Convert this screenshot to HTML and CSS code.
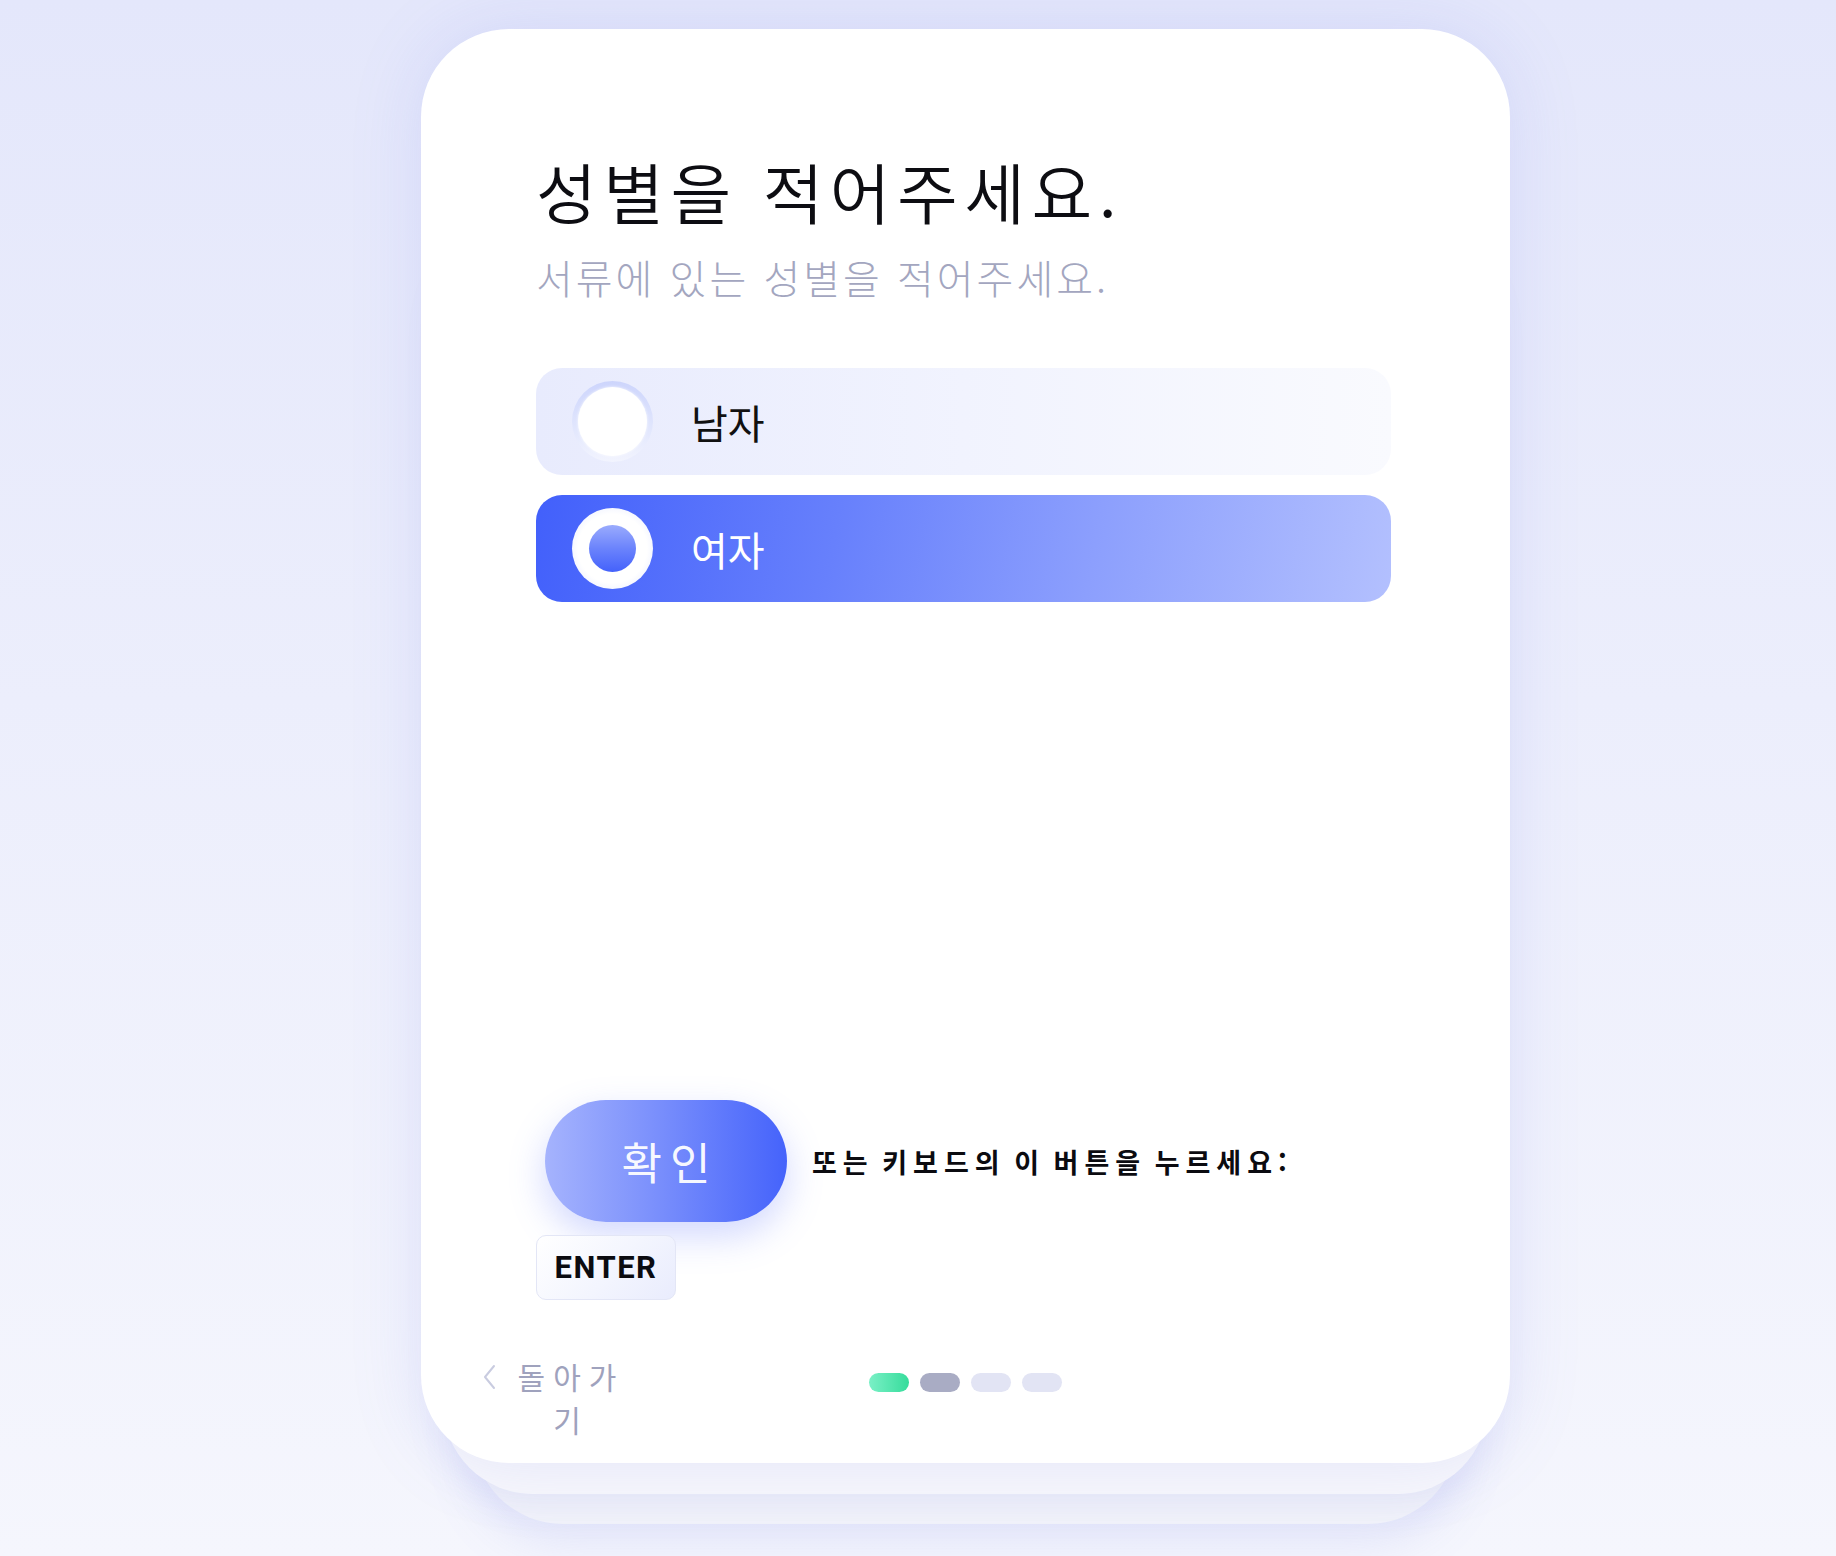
FILE: index.html
```html
<!DOCTYPE html>
<html lang="ko">
<head>
<meta charset="utf-8">
<title>성별</title>
<link rel="stylesheet" href="styles.css">
</head>
<body>
<main class="stage">
  <section class="card">
    <div class="content">
      <h1 class="title">성별을 적어주세요.</h1>
      <p class="subtitle">서류에 있는 성별을 적어주세요.</p>

      <div class="options">
        <label class="option">
          <span class="radio"><span class="radio-inner"></span></span>
          <span class="option-label">남자</span>
        </label>
        <label class="option option-selected">
          <span class="radio"><span class="radio-inner"></span></span>
          <span class="option-label">여자</span>
        </label>
      </div>
    </div>

    <div class="actions">
      <button class="confirm" type="button">확인</button>
      <span class="hint">또는 키보드의 이 버튼을 누르세요:</span>
      <kbd class="key">ENTER</kbd>
    </div>

    <footer class="footer">
      <a class="back" href="#">
        <svg class="chev" width="14" height="28" viewBox="0 0 14 28" aria-hidden="true">
          <polyline points="12,3 3,14 12,25" fill="none" stroke="#c9cce0" stroke-width="2" stroke-linecap="round" stroke-linejoin="round"/>
        </svg>
        <span class="back-text">돌아가기</span>
      </a>
      <div class="dots">
        <span class="dot dot-done"></span>
        <span class="dot dot-current"></span>
        <span class="dot"></span>
        <span class="dot"></span>
      </div>
      <span class="footer-spacer"></span>
    </footer>
  </section>
</main>
</body>
</html>
```

FILE: styles.css
```css
* { box-sizing: border-box; }

html, body {
  margin: 0;
  height: 100%;
}

body {
  background: linear-gradient(180deg, #e4e7fb 0%, #eceefc 45%, #f5f6fd 100%);
  font-family: "Noto Sans CJK KR", "Noto Sans", sans-serif;
  color: #111;
  overflow: hidden;
}

.stage {
  isolation: isolate;
  padding: 29px 0 0 421px;
}

.card {
  position: relative;
  width: 1089px;
  height: 1434px;
  background: #fff;
  border-radius: 88px;
  box-shadow: 0 0 70px rgba(120, 128, 230, 0.17);
  display: flex;
  flex-direction: column;
  padding: 122px 0 22px;
}

.card::before,
.card::after {
  content: "";
  position: absolute;
  border-radius: 90px;
}

.card::before {
  z-index: -1;
  left: 22px;
  right: 22px;
  top: 200px;
  bottom: -31px;
  background: #f8f8fc;
  box-shadow: 0 10px 40px rgba(120, 128, 230, 0.10);
}

.card::after {
  z-index: -2;
  left: 52px;
  right: 52px;
  top: 300px;
  bottom: -61px;
  background: #f3f4fa;
  box-shadow: 0 16px 50px rgba(120, 128, 230, 0.16);
}

.content {
  padding: 0 119px 0 115px;
}

.title {
  margin: 0;
  font-size: 66px;
  line-height: 79px;
  font-weight: 350;
  letter-spacing: 6.5px;
  color: #0d0d12;
  white-space: nowrap;
}

.subtitle {
  margin: 21px 0 0;
  font-size: 40px;
  line-height: 52px;
  font-weight: 300;
  letter-spacing: 3px;
  color: #a3a6bf;
  white-space: nowrap;
}

.options {
  margin-top: 65px;
  display: flex;
  flex-direction: column;
  gap: 20px;
}

.option {
  height: 107px;
  border-radius: 26px;
  display: flex;
  align-items: center;
  padding-left: 36px;
  background: linear-gradient(90deg, #e8ebfd 0%, #f1f3fe 50%, #f9fafe 100%);
  cursor: pointer;
}

.radio {
  width: 81px;
  height: 81px;
  border-radius: 50%;
  flex: none;
  padding: 6px;
  background: linear-gradient(180deg, #cdd5fc 0%, #e2e7fd 60%, #f2f4fe 100%);
  display: flex;
  align-items: center;
  justify-content: center;
}

.radio-inner {
  width: 100%;
  height: 100%;
  border-radius: 50%;
  background: #fff;
  box-shadow: 0 0 3px rgba(255, 255, 255, 0.9);
}

.option-label {
  margin-left: 38px;
  font-size: 40px;
  line-height: 1;
  font-weight: 400;
  color: #111;
}

.option-selected {
  background: linear-gradient(100deg, #4260fb 0%, #6780fc 35%, #8c9ffd 65%, #b3c0fe 100%);
}

.option-selected .radio {
  padding: 17px;
  background: radial-gradient(circle at 50% 50%, #ffffff 60%, #eef1ff 80%, #dfe5ff 100%);
}

.option-selected .radio-inner {
  background: linear-gradient(180deg, #9aabfd 0%, #6b83fc 50%, #4462fb 100%);
  box-shadow: none;
}

.option-selected .option-label {
  color: #fff;
}

.actions {
  margin-top: auto;
  padding: 0 119px 0 115px;
  display: flex;
  flex-wrap: wrap;
  align-items: center;
  column-gap: 25px;
  row-gap: 13px;
}

.confirm {
  margin-left: 9px;
  width: 242px;
  height: 122px;
  border: 0;
  border-radius: 61px;
  background: linear-gradient(90deg, #a5b3fd 0%, #7b90fc 45%, #4563fb 100%);
  box-shadow: 0 14px 36px rgba(95, 115, 250, 0.28);
  color: rgba(255, 255, 255, 0.95);
  font-family: "Noto Sans CJK KR", sans-serif;
  font-size: 44px;
  font-weight: 400;
  letter-spacing: 8px;
  padding: 0 0 0 8px;
  cursor: pointer;
}

.hint {
  font-size: 27px;
  font-weight: 700;
  letter-spacing: 6px;
  word-spacing: -5px;
  color: #0b0b10;
}

.key {
  width: 140px;
  height: 65px;
  display: flex;
  align-items: center;
  justify-content: center;
  border: 1.5px solid #e3e6f6;
  border-radius: 10px;
  background: linear-gradient(135deg, #ffffff 0%, #f3f5fe 55%, #e9ecfd 100%);
  font-family: Roboto, "Liberation Sans", sans-serif;
  font-weight: 700;
  font-size: 31px;
  letter-spacing: 1.5px;
  color: #0b0b10;
}

.footer {
  margin-top: 55px;
  padding: 0 61px;
  display: grid;
  grid-template-columns: 1fr auto 1fr;
  align-items: start;
}

.back {
  display: flex;
  align-items: flex-start;
  gap: 13px;
  text-decoration: none;
  color: #9fa2bd;
}

.chev {
  margin-top: 8px;
  flex: none;
}

.back-text {
  width: 124px;
  text-align: center;
  font-size: 30px;
  line-height: 43px;
  letter-spacing: 8px;
  font-weight: 400;
  color: #9fa2bd;
}

.dots {
  display: flex;
  gap: 11px;
  margin-top: 18px;
}

.dot {
  width: 40px;
  height: 19px;
  border-radius: 10px;
  background: #e2e4f4;
}

.dot-done {
  background: linear-gradient(90deg, #7af0c6 0%, #36dc9b 100%);
}

.dot-current {
  background: #a9acc4;
}
```
